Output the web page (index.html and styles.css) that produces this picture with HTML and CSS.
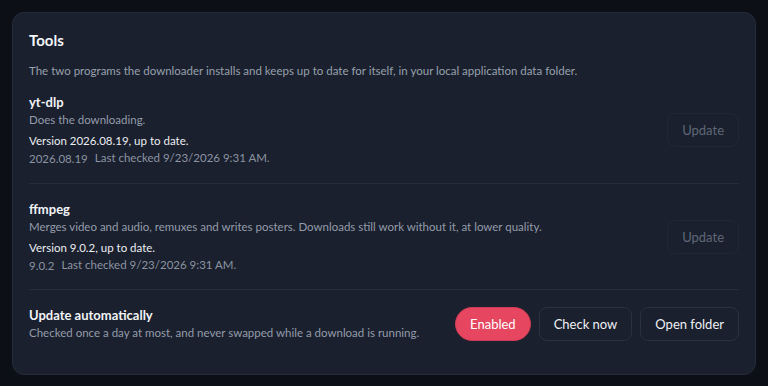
FILE: index.html
```html
<!DOCTYPE html>
<html lang="en">
<head>
  <meta charset="UTF-8">
  <meta name="viewport" content="width=device-width, initial-scale=1.0">
  <title>Tools</title>
  <link rel="stylesheet" href="styles.css">
</head>
<body>

<div class="card">
  <h2 class="card-title">Tools</h2>
  <p class="intro">The two programs the downloader installs and keeps up to date for itself, in your local application data folder.</p>

  <div class="row first">
    <div class="info">
      <div class="name">yt-dlp</div>
      <div class="desc">Does the downloading.</div>
      <div class="status">Version 2026.08.19, up to date.</div>
      <div class="meta"><span class="ver">2026.08.19</span><span>Last checked 9/23/2026 9:31 AM.</span></div>
    </div>
    <button class="btn" disabled>Update</button>
  </div>

  <div class="row">
    <div class="info">
      <div class="name">ffmpeg</div>
      <div class="desc">Merges video and audio, remuxes and writes posters. Downloads still work without it, at lower quality.</div>
      <div class="status">Version 9.0.2, up to date.</div>
      <div class="meta"><span class="ver">9.0.2</span><span>Last checked 9/23/2026 9:31 AM.</span></div>
    </div>
    <button class="btn" disabled>Update</button>
  </div>

  <div class="row last">
    <div class="info">
      <div class="name">Update automatically</div>
      <div class="desc">Checked once a day at most, and never swapped while a download is running.</div>
    </div>
    <div class="actions">
      <button class="btn pill">Enabled</button>
      <button class="btn">Check now</button>
      <button class="btn">Open folder</button>
    </div>
  </div>
</div>

</body>
</html>
```

FILE: styles.css
```css
body {
  margin: 0;
  padding: 12px;
  background-color: #0c0f15;
  font-family: Lato, "Noto Sans", sans-serif;
  color: #eef0f4;
}

.card {
  background-color: #1a202d;
  border: 1px solid #242b39;
  border-radius: 12px;
  padding: 17px 16px 16px 16px;
}

.card-title {
  margin: 0;
  font-size: 15px;
  font-weight: bold;
  line-height: 20px;
  color: #f3f5f8;
}

.intro {
  margin: 12px 0 0 0;
  font-size: 11.5px;
  line-height: 18px;
  color: #98a0ae;
}

.row {
  display: flex;
  justify-content: space-between;
  align-items: center;
  padding: 16px 0;
  border-bottom: 1px solid #262c3a;
}

.row.first {
  padding-top: 13px;
  padding-bottom: 17px;
}

.row.last {
  border-bottom: none;
}

.name {
  font-size: 13px;
  font-weight: bold;
  line-height: 18px;
  color: #f1f3f7;
}

.desc {
  font-size: 11.5px;
  line-height: 18px;
  color: #949cab;
}

.status {
  margin-top: 3px;
  font-size: 11.5px;
  line-height: 17px;
  color: #eceef3;
}

.meta {
  display: flex;
  gap: 7px;
  font-size: 11.5px;
  line-height: 17px;
  color: #8c94a3;
}

.meta .ver {
  position: relative;
  top: 1px;
}

.actions {
  display: flex;
  gap: 8px;
}

.btn {
  height: 34px;
  padding: 0 14px;
  font-family: inherit;
  font-size: 13px;
  color: #eef0f4;
  background-color: #1a202d;
  border: 1px solid #2a3140;
  border-radius: 8px;
  cursor: pointer;
}

.btn:disabled {
  color: #5f6778;
  border-color: #212735;
  cursor: default;
}

.btn.pill {
  background-color: #e6465f;
  border-color: #cf3c54;
  border-radius: 17px;
  color: #fff;
}
```
